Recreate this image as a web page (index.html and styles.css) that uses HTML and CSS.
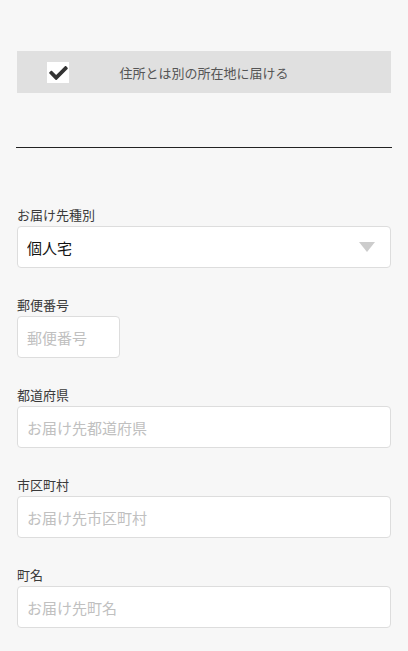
FILE: index.html
```html
<!DOCTYPE html>
<html lang="ja">
<head>
    <meta charset="UTF-8">
    <meta name="viewport" content="width=device-width, initial-scale=1.0">
    <title>お届け先</title>
    <link rel="stylesheet" href="styles.css">
</head>
<body>
    <div class="container">
        <label class="ship-toggle">
            <span class="check-box">
                <svg viewBox="0 64 512 384" width="19" height="14"><path d="M173.9 439.4l-166.4-166.4c-10-10-10-26.2 0-36.2l36.2-36.2c10-10 26.2-10 36.2 0L192 312.7 432.1 72.6c10-10 26.2-10 36.2 0l36.2 36.2c10 10 10 26.2 0 36.2l-294.4 294.4c-10 10-26.2 10-36.2 0z" fill="#333"/></svg>
            </span>
            <span class="ship-text">住所とは別の所在地に届ける</span>
        </label>

        <hr class="divider">

        <form class="ship-form">
            <div class="form-group">
                <label for="type">お届け先種別</label>
                <div class="select-wrap">
                    <select id="type" name="type">
                        <option>個人宅</option>
                        <option>法人</option>
                    </select>
                </div>
            </div>

            <div class="form-group">
                <label for="zip">郵便番号</label>
                <input type="text" id="zip" name="zip" class="short" placeholder="郵便番号">
            </div>

            <div class="form-group">
                <label for="pref">都道府県</label>
                <input type="text" id="pref" name="pref" placeholder="お届け先都道府県">
            </div>

            <div class="form-group">
                <label for="city">市区町村</label>
                <input type="text" id="city" name="city" placeholder="お届け先市区町村">
            </div>

            <div class="form-group">
                <label for="town">町名</label>
                <input type="text" id="town" name="town" placeholder="お届け先町名">
            </div>
        </form>
    </div>
</body>
</html>
```

FILE: styles.css
```css
body {
    margin: 0;
    background-color: #f7f7f7;
    font-family: "Noto Sans CJK JP", "Noto Sans", sans-serif;
    color: #333;
}
.container {
    padding: 51px 17px 0;
}
.ship-toggle {
    display: grid;
    grid-template-columns: 1fr auto 1fr;
    align-items: center;
    height: 42px;
    background-color: #e0e0e0;
}
.check-box {
    justify-self: start;
    margin-left: 30px;
    width: 22px;
    height: 21px;
    background-color: white;
    display: flex;
    align-items: center;
    justify-content: center;
}
.check-box svg {
    display: block;
    margin-top: 2px;
}
.ship-text {
    font-size: 13px;
    color: #555;
}
.divider {
    margin: 54px -1px 0;
    border: none;
    height: 1px;
    background-color: #222;
}
.ship-form {
    padding-top: 58px;
}
.form-group {
    margin-bottom: 28px;
}
.form-group label {
    display: block;
    font-size: 13px;
    line-height: 18px;
    margin-bottom: 2px;
    color: #3a3a3a;
}
input[type="text"], select {
    display: block;
    box-sizing: border-box;
    width: 100%;
    height: 42px;
    padding: 0 9px;
    border: 1px solid #ddd;
    border-radius: 4px;
    background-color: white;
    font-family: inherit;
    font-size: 15px;
    color: #111;
    outline: none;
}
input::placeholder {
    color: #c0c0c0;
}
input.short {
    width: 103px;
}
select {
    appearance: none;
    -webkit-appearance: none;
}
.select-wrap {
    position: relative;
}
.select-wrap::after {
    content: "";
    position: absolute;
    top: 16px;
    right: 16px;
    border-left: 8px solid transparent;
    border-right: 8px solid transparent;
    border-top: 10px solid #ccc;
    pointer-events: none;
}
```
